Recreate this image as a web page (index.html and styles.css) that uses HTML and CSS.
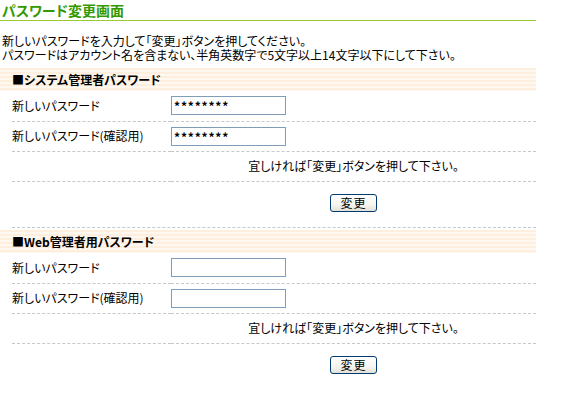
FILE: index.html
```html
<!DOCTYPE html>
<html lang="ja">
<head>
    <meta charset="UTF-8">
    <title>パスワード変更画面</title>
    <link rel="stylesheet" href="styles.css">
</head>
<body>
    <div class="page">
        <h1 class="page-title">パスワード変更画面</h1>

        <p class="intro">
            新しいパスワードを入力して「変更」ボタンを押してください。<br>
            パスワードはアカウント名を含まない、半角英数字で5文字以上14文字以下にして下さい。
        </p>

        <form class="pw-section">
            <h2 class="section-head">■システム管理者パスワード</h2>
            <table class="pw-table">
                <tr>
                    <th>新しいパスワード</th>
                    <td><input type="text" class="pw-input" value="********"></td>
                </tr>
                <tr>
                    <th>新しいパスワード(確認用)</th>
                    <td><input type="text" class="pw-input" value="********"></td>
                </tr>
                <tr>
                    <th></th>
                    <td class="note">宜しければ「変更」ボタンを押して下さい。</td>
                </tr>
                <tr class="submit-row">
                    <th></th>
                    <td><button type="button" class="btn">変更</button></td>
                </tr>
            </table>
        </form>

        <hr class="divider">

        <form class="pw-section">
            <h2 class="section-head">■Web管理者用パスワード</h2>
            <table class="pw-table">
                <tr>
                    <th>新しいパスワード</th>
                    <td><input type="text" class="pw-input"></td>
                </tr>
                <tr>
                    <th>新しいパスワード(確認用)</th>
                    <td><input type="text" class="pw-input"></td>
                </tr>
                <tr>
                    <th></th>
                    <td class="note">宜しければ「変更」ボタンを押して下さい。</td>
                </tr>
                <tr class="submit-row">
                    <th></th>
                    <td><button type="button" class="btn">変更</button></td>
                </tr>
            </table>
        </form>
    </div>
</body>
</html>
```

FILE: styles.css
```css
* {
    box-sizing: border-box;
    margin: 0;
    padding: 0;
}

body {
    font-family: "Noto Sans CJK JP", "Noto Sans", sans-serif;
    font-size: 12px;
    line-height: 14px;
    color: #000;
    background: #fff;
    font-feature-settings: "palt";
}

.page {
    width: 536px;
}

.page-title {
    font-size: 14px;
    line-height: 16px;
    font-weight: bold;
    color: #339900;
    padding: 2px 0 2px 2px;
    border-bottom: 1px solid #99cc33;
}

.intro {
    margin: 13px 0 6px;
    padding-left: 2px;
}

.section-head {
    height: 23px;
    line-height: 23px;
    padding-left: 12px;
    font-size: 12px;
    font-weight: bold;
    background: repeating-linear-gradient(to bottom, #fdeedd 0, #fdeedd 2px, #fff8f1 2px, #fff8f1 4px);
}

.divider {
    width: 524px;
    margin: 0 0 2px 12px;
    border: none;
    border-top: 1px dashed #c8c8c8;
}

.pw-table {
    width: 524px;
    margin-left: 12px;
    border-collapse: collapse;
}

.pw-table th,
.pw-table td {
    height: 30px;
    border-bottom: 1px dashed #c8c8c8;
    vertical-align: middle;
    text-align: left;
    font-weight: normal;
}

.pw-table th {
    width: 159px;
}

.pw-table .note {
    text-align: center;
    height: 30px;
}

.submit-row th,
.submit-row td {
    height: 46px;
    border-bottom: none;
    vertical-align: top;
    padding-top: 12px;
    text-align: center;
}

.pw-input {
    display: block;
    width: 115px;
    height: 19px;
    border: 1px solid #7f9db9;
    padding: 0 2px;
    font-family: "Noto Sans CJK JP", sans-serif;
    font-size: 12px;
    font-weight: bold;
    letter-spacing: 0.8px;
    color: #000;
    outline: none;
}

.btn {
    width: 47px;
    height: 18px;
    border: 1px solid #003c74;
    border-radius: 3px;
    background: linear-gradient(to bottom, #ffffff 0%, #f6f5ef 60%, #e3e1d6 100%);
    font-family: "Noto Sans CJK JP", sans-serif;
    font-size: 12px;
    line-height: 14px;
    color: #000;
    letter-spacing: 1px;
}
```
